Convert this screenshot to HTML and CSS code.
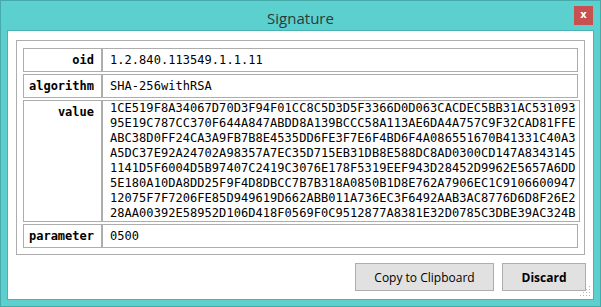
FILE: index.html
```html
<!DOCTYPE html>
<html lang="en">
    <head>
        <meta charset="UTF-8">
        <title>Signature</title>
        <link rel="stylesheet" href="styles.css">
    </head>
    <body>
        <div class="window">
            <div class="titlebar">
                <span class="title">Signature</span>
                <span class="close">x</span>
            </div>
            <div class="client">
                <div class="fields">
                    <div class="row">
                        <div class="label">oid</div>
                        <div class="value">1.2.840.113549.1.1.11</div>
                    </div>
                    <div class="row">
                        <div class="label">algorithm</div>
                        <div class="value">SHA-256withRSA</div>
                    </div>
                    <div class="row row-wide">
                        <div class="label">value</div>
                        <div class="value value-block">1CE519F8A34067D70D3F94F01CC8C5D3D5F3366D0D063CACDEC5BB31AC531093<br>95E19C787CC370F644A847ABDD8A139BCCC58A113AE6DA4A757C9F32CAD81FFE<br>ABC38D0FF24CA3A9FB7B8E4535DD6FE3F7E6F4BD6F4A086551670B41331C40A3<br>A5DC37E92A24702A98357A7EC35D715EB31DB8E588DC8AD0300CD147A8343145<br>1141D5F6004D5B97407C2419C3076E178F5319EEF943D28452D9962E5657A6DD<br>5E180A10DA8DD25F9F4D8DBCC7B7B318A0850B1D8E762A7906EC1C9106600947<br>12075F7F7206FE85D949619D662ABB011A736EC3F6492AAB3AC8776D6D8F26E2<br>28AA00392E58952D106D418F0569F0C9512877A8381E32D0785C3DBE39AC324B</div>
                    </div>
                    <div class="row">
                        <div class="label">parameter</div>
                        <div class="value">0500</div>
                    </div>
                </div>
                <div class="buttons">
                    <button class="btn">Copy to Clipboard</button>
                    <button class="btn btn-default">Discard</button>
                </div>
                <svg class="grip" width="12" height="12" viewBox="0 0 12 12">
                    <g fill="#b8b8b8">
                        <rect x="9" y="0" width="1" height="1"/>
                        <rect x="6" y="3" width="1" height="1"/>
                        <rect x="9" y="3" width="1" height="1"/>
                        <rect x="3" y="6" width="1" height="1"/>
                        <rect x="6" y="6" width="1" height="1"/>
                        <rect x="9" y="6" width="1" height="1"/>
                        <rect x="0" y="9" width="1" height="1"/>
                        <rect x="3" y="9" width="1" height="1"/>
                        <rect x="6" y="9" width="1" height="1"/>
                        <rect x="9" y="9" width="1" height="1"/>
                    </g>
                </svg>
            </div>
        </div>
    </body>
</html>
```

FILE: styles.css
```css
body {
    margin: 0;
    padding: 0;
    background-color: #ffffff;
    font-family: 'Open Sans', 'Noto Sans', sans-serif;
}
.window {
    width: 601px;
    height: 307px;
    box-sizing: border-box;
    background-color: #5ccfcf;
    border: 1px solid #46aaaa;
    padding: 0 6px 6px 6px;
    display: flex;
    flex-direction: column;
}
.titlebar {
    position: relative;
    height: 29px;
    flex-shrink: 0;
    display: flex;
    justify-content: center;
    align-items: center;
}
.title {
    font-size: 15px;
    color: #2b3a3a;
    padding-top: 4px;
}
.close {
    position: absolute;
    top: 5px;
    right: 1px;
    width: 19px;
    height: 19px;
    background-color: #c75050;
    color: #ffffff;
    font-family: 'DejaVu Sans', sans-serif;
    font-weight: bold;
    font-size: 10px;
    line-height: 18px;
    text-align: center;
}
.client {
    position: relative;
    flex: 1;
    background-color: #ffffff;
    border: 1px solid #4ab2b2;
    padding: 9px 8px 7px 8px;
    display: flex;
    flex-direction: column;
    gap: 8px;
}
.fields {
    border: 1px solid #adadad;
    padding: 7px 6px 6px 6px;
    display: flex;
    flex-direction: column;
    gap: 2px;
}
.row {
    display: flex;
    border: 1px solid #adadad;
    font-family: 'DejaVu Sans Mono', monospace;
    font-size: 12px;
    line-height: 22px;
    color: #000000;
}
.row-wide {
    margin-right: -2px;
}
.label {
    width: 70px;
    flex-shrink: 0;
    padding-right: 7px;
    text-align: right;
    font-weight: bold;
    border-right: 1px solid #adadad;
}
.value {
    flex: 1;
    padding-left: 7px;
    border-left: 1px solid #adadad;
    letter-spacing: 0.05px;
    white-space: nowrap;
}
.value-block {
    line-height: 15px;
}
.buttons {
    display: flex;
    justify-content: flex-end;
    gap: 8px;
}
.btn {
    height: 28px;
    background-color: #e1e1e1;
    border: 1px solid #adadad;
    border-radius: 0;
    font-family: 'Open Sans', 'Noto Sans', sans-serif;
    font-size: 12px;
    color: #000000;
    padding: 0;
}
.btn:first-child {
    width: 139px;
}
.btn-default {
    width: 84px;
    font-weight: bold;
    margin-right: -1px;
}
.grip {
    position: absolute;
    right: 1px;
    bottom: 1px;
}
```
